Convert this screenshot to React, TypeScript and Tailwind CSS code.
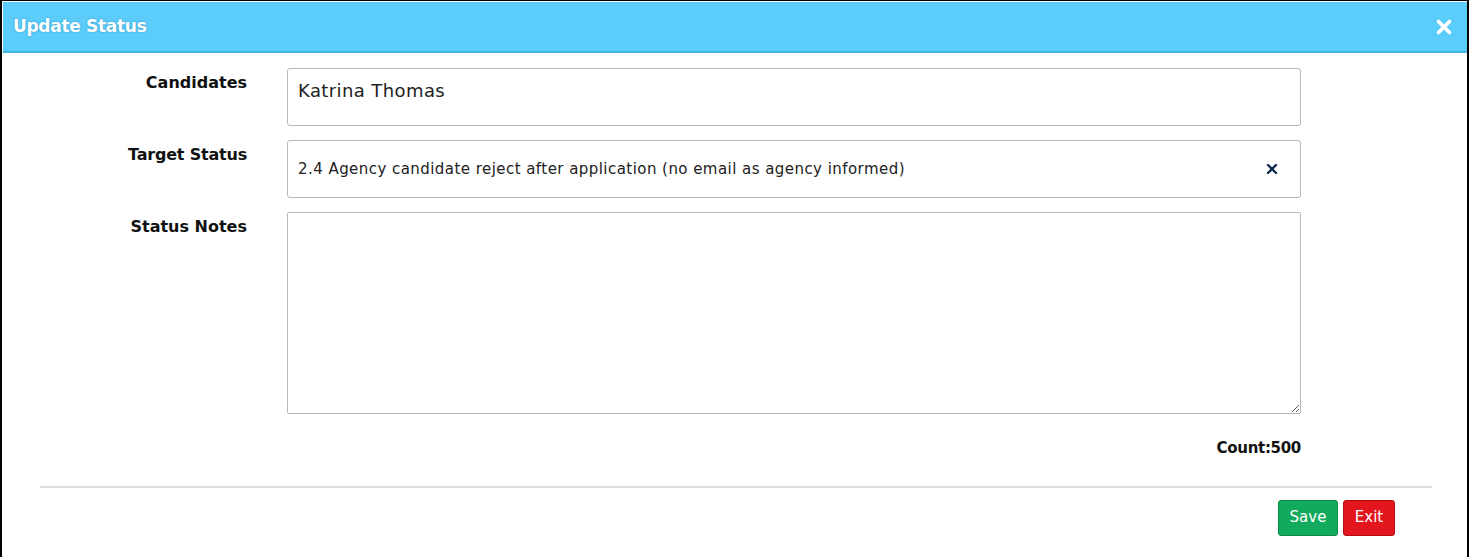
import { X } from 'lucide-react'

export default function App() {
  return (
    <div className="w-[1469px] h-[557px] border-l-2 border-t border-r-2 border-black bg-white" style={{ fontFamily: '"DejaVu Sans", sans-serif' }}>
      <div className="h-[51px] mt-[1px] ml-[1px] bg-[#5ccdfa] border-b-2 border-[#43b4e6] flex items-center justify-between pl-[10px] pr-[12px]">
        <span className="text-white text-[17px] font-semibold tracking-[-0.3px] [text-shadow:0_0_2px_rgba(0,90,140,0.5)]">Update Status</span>
        <X size={22} strokeWidth={4} className="text-white" />
      </div>

      <div className="pt-[15px] flex flex-col gap-[14px]">
        <div className="flex">
          <div className="w-[245px] text-right text-[16px] font-bold text-[#111] pt-[3px]">Candidates</div>
          <div className="ml-[40px] w-[1014px] h-[58px] border border-[#b8b8b8] rounded-[3px] px-[10px] pt-[8px] text-[18px] tracking-[0.4px] text-[#222]">Katrina Thomas</div>
        </div>
        <div className="flex">
          <div className="w-[245px] text-right text-[16px] font-bold text-[#111] pt-[3px] tracking-[-0.2px]">Target Status</div>
          <div className="ml-[40px] w-[1014px] h-[58px] border border-[#b8b8b8] rounded-[3px] pl-[10px] pr-[20px] flex items-center justify-between text-[15px] tracking-[0.45px] text-[#222]">
            <span>2.4 Agency candidate reject after application (no email as agency informed)</span>
            <X size={16} strokeWidth={3.5} className="text-[#0d2b4a]" />
          </div>
        </div>
        <div className="flex">
          <div className="w-[245px] text-right text-[16px] font-bold text-[#111] pt-[3px]">Status Notes</div>
          <textarea className="ml-[40px] w-[1014px] h-[202px] border border-[#b8b8b8] rounded-[2px] outline-none" />
        </div>
      </div>

      <div className="w-[1299px] text-right text-[15px] font-bold text-[#111] mt-[23px] tracking-[-0.3px]">Count:500</div>

      <div className="ml-[38px] w-[1392px] h-[2px] bg-[#dedede] mt-[26px]" />

      <div className="flex justify-end gap-[5px] pr-[72px] mt-[12px]">
        <button className="w-[60px] h-[36px] bg-[#12aa5c] border border-[#0b8a47] rounded-[3px] text-white text-[15px]">Save</button>
        <button className="w-[52px] h-[36px] bg-[#e4161d] border border-[#b10d12] rounded-[3px] text-white text-[15px]">Exit</button>
      </div>
    </div>
  )
}
